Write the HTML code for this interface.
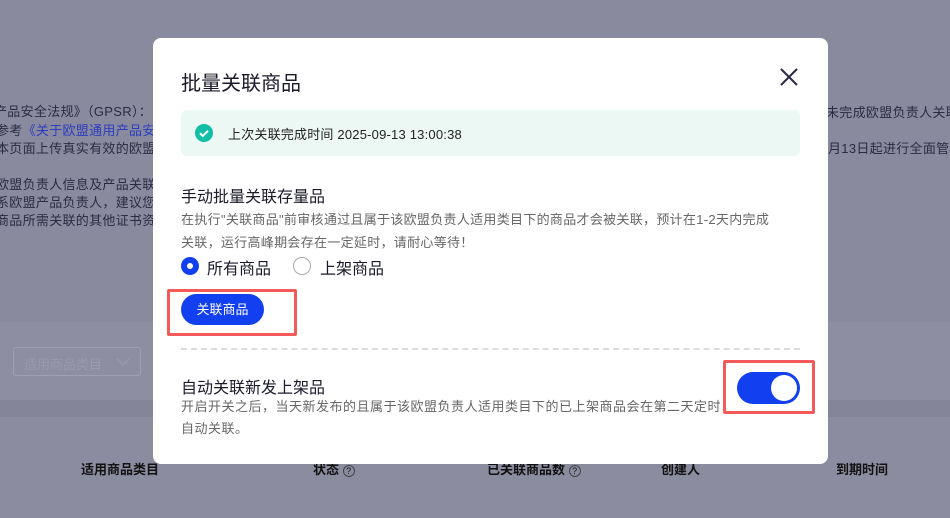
<!DOCTYPE html>
<html><head><meta charset="utf-8"><style>
*{margin:0;padding:0;box-sizing:border-box}
body{width:950px;height:518px;overflow:hidden;position:relative;background:#8a8a9f;font-family:"Liberation Sans","Noto Sans CJK SC",sans-serif;color:#1f1f2e}
.a{position:absolute;white-space:nowrap}
.bg{color:#2a2a40;font-size:13px;letter-spacing:0.3px}
</style></head><body>
<div class="a" style="left:0;top:322px;width:950px;height:78px;background:#8e8ea3"></div>
<div class="a" style="left:0;top:400px;width:950px;height:17px;background:#85859a"></div>
<div class="a" style="left:0;top:417px;width:950px;height:101px;background:#8c8ca1"></div>
<div class="a bg" style="left:-6px;top:101px">产品安全法规》（GPSR）：</div>
<div class="a bg" style="left:-4px;top:120px">参考<span style="color:#2a3cc0">《关于欧盟通用产品安</span></div>
<div class="a bg" style="left:-4px;top:138px">本页面上传真实有效的欧盟</div>
<div class="a bg" style="left:-4px;top:174px">欧盟负责人信息及产品关联</div>
<div class="a bg" style="left:-4px;top:192px">系欧盟产品负责人，建议您</div>
<div class="a bg" style="left:-4px;top:210px">商品所需关联的其他证书资</div>
<div class="a bg" style="left:826px;top:102px">未完成欧盟负责人关联</div>
<div class="a bg" style="left:828px;top:138px">月13日起进行全面管控</div>
<div class="a" style="left:13px;top:347px;width:128px;height:29px;border:1px solid #a0a0b2;border-radius:3px;font-size:13px;color:#9a9aac;padding:6px 0 0 10px">适用商品类目
<svg style="position:absolute;left:102px;top:10px" width="14" height="9"><path d="M1 1l6 6 6-6" stroke="#9a9aac" stroke-width="1.5" fill="none"/></svg></div>
<div class="a" style="left:81px;top:459px;font-size:13px;font-weight:bold;color:#111">适用商品类目</div>
<div class="a" style="left:313px;top:459px;font-size:13px;font-weight:bold;color:#111">状态 <span style="display:inline-block;width:12px;height:12px;border:1px solid #444;border-radius:50%;font-size:9px;text-align:center;line-height:10px;font-weight:normal">?</span></div>
<div class="a" style="left:487px;top:459px;font-size:13px;font-weight:bold;color:#111">已关联商品数 <span style="display:inline-block;width:12px;height:12px;border:1px solid #444;border-radius:50%;font-size:9px;text-align:center;line-height:10px;font-weight:normal">?</span></div>
<div class="a" style="left:661px;top:459px;font-size:13px;font-weight:bold;color:#111">创建人</div>
<div class="a" style="left:836px;top:459px;font-size:13px;font-weight:bold;color:#111">到期时间</div>

<div class="a" style="left:153px;top:38px;width:675px;height:426px;background:#fff;border-radius:8px"></div>
<div class="a" style="left:181px;top:67px;font-size:20px;color:#1a1a2a">批量关联商品</div>
<svg class="a" style="left:779px;top:67px" width="20" height="20"><path d="M2 2L18 18M18 2L2 18" stroke="#2a2a44" stroke-width="2"/></svg>
<div class="a" style="left:181px;top:110px;width:619px;height:46px;background:#ecf8f4;border-radius:6px"></div>
<svg class="a" style="left:195px;top:124px" width="18" height="18"><circle cx="9" cy="9" r="9" fill="#12bfa6"/><path d="M5 9.3l2.8 2.7L13 6.8" stroke="#fff" stroke-width="2" fill="none"/></svg>
<div class="a" style="left:228px;top:124px;font-size:13px;color:#222;letter-spacing:0.2px">上次关联完成时间 2025-09-13 13:00:38</div>
<div class="a" style="left:181px;top:183px;font-size:16px;color:#1a1a2a">手动批量关联存量品</div>
<div class="a" style="left:181px;top:208px;font-size:13px;color:#666;line-height:23px;white-space:normal;width:592px;letter-spacing:0.3px">在执行"关联商品"前审核通过且属于该欧盟负责人适用类目下的商品才会被关联，预计在1-2天内完成关联，运行高峰期会存在一定延时，请耐心等待！</div>
<div class="a" style="left:181px;top:257px;width:18px;height:18px;border-radius:50%;background:#1240f0"><div style="margin:6px;width:6px;height:6px;border-radius:50%;background:#fff"></div></div>
<div class="a" style="left:207px;top:255px;font-size:16px;color:#1a1a2a">所有商品</div>
<div class="a" style="left:293px;top:257px;width:18px;height:18px;border-radius:50%;border:1px solid #aaa"></div>
<div class="a" style="left:320px;top:255px;font-size:16px;color:#1a1a2a">上架商品</div>
<div class="a" style="left:181px;top:294px;width:83px;height:31px;border-radius:16px;background:#1240f0;color:#fff;font-size:13px;text-align:center;line-height:31px">关联商品</div>
<div class="a" style="left:167px;top:289px;width:130px;height:47px;border:3px solid #f55a5a;border-radius:2px"></div>
<div class="a" style="left:181px;top:348px;width:619px;border-top:2px dashed #dcdce0"></div>
<div class="a" style="left:181px;top:374px;font-size:16px;color:#1a1a2a">自动关联新发上架品</div>
<div class="a" style="left:181px;top:396px;font-size:13px;color:#666;line-height:22px;white-space:normal;width:545px;letter-spacing:0.5px">开启开关之后，当天新发布的且属于该欧盟负责人适用类目下的已上架商品会在第二天定时自动关联。</div>
<div class="a" style="left:737px;top:372px;width:63px;height:32px;border-radius:16px;background:#1240f0"><div style="position:absolute;right:3px;top:3px;width:26px;height:26px;border-radius:50%;background:#fff"></div></div>
<div class="a" style="left:723px;top:360px;width:92px;height:54px;border:3px solid #f55a5a;border-radius:2px"></div>
</body></html>
